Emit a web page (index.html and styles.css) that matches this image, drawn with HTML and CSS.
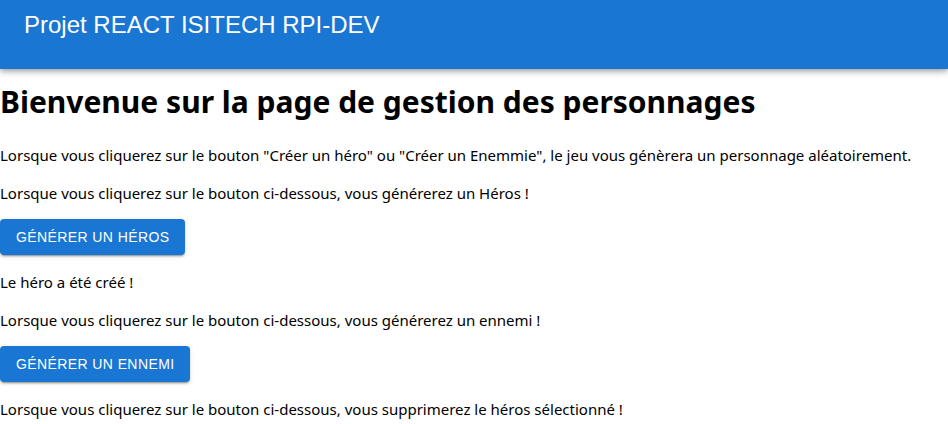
FILE: index.html
```html
<!DOCTYPE html>
<html lang="fr">
<head>
<meta charset="utf-8">
<title>Projet REACT ISITECH RPI-DEV</title>
<link rel="stylesheet" href="styles.css">
</head>
<body>
<header class="app-bar">
  <div class="toolbar">
    <h2 class="app-title">Projet REACT ISITECH RPI-DEV</h2>
  </div>
</header>
<main class="content">
  <h1 class="page-title">Bienvenue sur la page de gestion des personnages</h1>
  <p class="text">Lorsque vous cliquerez sur le bouton "Créer un héro" ou "Créer un Enemmie", le jeu vous génèrera un personnage aléatoirement.</p>
  <p class="text">Lorsque vous cliquerez sur le bouton ci-dessous, vous générerez un Héros !</p>
  <button class="btn" type="button">Générer un héros</button>
  <p class="text">Le héro a été créé !</p>
  <p class="text">Lorsque vous cliquerez sur le bouton ci-dessous, vous générerez un ennemi !</p>
  <button class="btn" type="button">Générer un ennemi</button>
  <p class="text">Lorsque vous cliquerez sur le bouton ci-dessous, vous supprimerez le héros sélectionné !</p>
</main>
</body>
</html>
```
FILE: styles.css
```css
html, body {
  margin: 0;
  padding: 0;
  background: #ffffff;
}

body {
  font-family: "Noto Sans", "Open Sans", sans-serif;
  color: #000000;
}

.app-bar {
  position: relative;
  z-index: 2;
  height: 69px;
  box-sizing: border-box;
  background: #1976d2;
  color: #ffffff;
  box-shadow: 0px 2px 4px -1px rgba(0, 0, 0, 0.2), 0px 4px 5px 0px rgba(0, 0, 0, 0.14), 0px 1px 10px 0px rgba(0, 0, 0, 0.12);
}

.toolbar {
  display: flex;
  align-items: flex-start;
  padding: 9px 24px 0;
}

.app-title {
  margin: 0;
  font-family: "Liberation Sans", Arial, sans-serif;
  font-size: 24px;
  font-weight: 400;
  line-height: 32px;
}

.content {
  display: flow-root;
}

.page-title {
  margin: 12px 0 20.5px;
  font-family: "Noto Sans", sans-serif;
  font-size: 30px;
  font-weight: 700;
  line-height: 42.5px;
}

.text {
  margin: 16px 0;
  padding-top: 1.3px;
  font-size: 15px;
  line-height: 20px;
}

.btn {
  display: block;
  margin: 0;
  padding: 6px 16px;
  border: 0;
  border-radius: 4px;
  background: #1976d2;
  color: #ffffff;
  font-family: "Liberation Sans", Arial, sans-serif;
  font-size: 14px;
  font-weight: 500;
  line-height: 24.5px;
  letter-spacing: 0.4px;
  text-transform: uppercase;
  box-shadow: 0px 3px 1px -2px rgba(0, 0, 0, 0.2), 0px 2px 2px 0px rgba(0, 0, 0, 0.14), 0px 1px 5px 0px rgba(0, 0, 0, 0.12);
  cursor: pointer;
}
```
